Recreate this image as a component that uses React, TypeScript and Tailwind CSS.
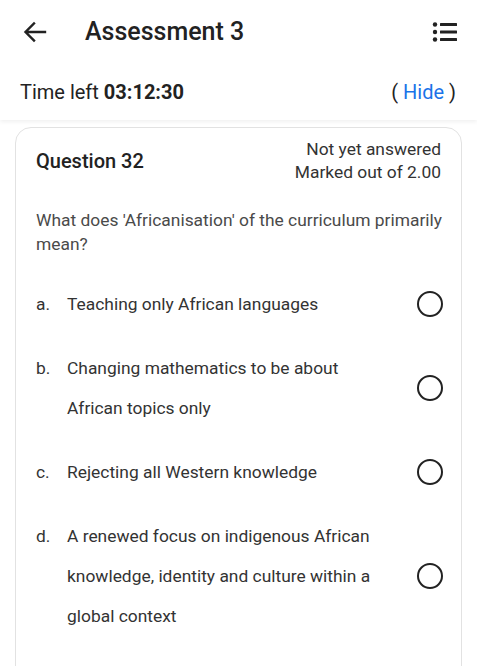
import React from "react";

type Option = { letter: string; text: string };

const options: Option[] = [
  { letter: "a.", text: "Teaching only African languages" },
  { letter: "b.", text: "Changing mathematics to be about African topics only" },
  { letter: "c.", text: "Rejecting all Western knowledge" },
  {
    letter: "d.",
    text: "A renewed focus on indigenous African knowledge, identity and culture within a global context",
  },
];

function BackArrow() {
  return (
    <svg width="24" height="24" viewBox="0 0 24 24" fill="none">
      <path d="M22 12H3M11 3.5L2.5 12L11 20.5" stroke="#222" strokeWidth="2.4" strokeLinecap="square" />
    </svg>
  );
}

function ListIcon() {
  return (
    <svg width="26" height="22" viewBox="0 0 26 22" fill="#222">
      <circle cx="3" cy="3.5" r="2.2" />
      <circle cx="3" cy="11" r="2.2" />
      <circle cx="3" cy="18.5" r="2.2" />
      <rect x="8" y="2" width="17" height="3" rx="0.5" />
      <rect x="8" y="9.5" width="17" height="3" rx="0.5" />
      <rect x="8" y="17" width="17" height="3" rx="0.5" />
    </svg>
  );
}

export default function App() {
  return (
    <div className="min-h-screen bg-white font-['Roboto',sans-serif] text-[#222]">
      <div className="shadow-[0_2px_4px_rgba(0,0,0,0.06)]">
        <div className="flex h-[63px] items-center pl-[23px] pr-[19px]">
          <BackArrow />
          <h1 className="ml-[38px] flex-1 text-[25px] font-medium">Assessment 3</h1>
          <ListIcon />
        </div>
        <div className="flex h-[57px] items-center justify-between pl-[20px] pr-[21px] text-[20px]">
          <p>
            Time left <span className="font-bold">03:12:30</span>
          </p>
          <p>
            ( <span className="text-[#1a73e8]">Hide</span> )
          </p>
        </div>
      </div>

      <div className="mx-[15px] mt-[7px] rounded-[16px] border border-[#e2e2e2] px-[20px] pt-[10px] pb-12">
        <div className="flex items-center justify-between">
          <h2 className="text-[20px] font-medium">Question 32</h2>
          <div className="text-right text-[17.4px] leading-[23px] text-[#333]">
            <p>Not yet answered</p>
            <p>Marked out of 2.00</p>
          </div>
        </div>

        <p className="mt-[24px] mr-[-6px] text-[17.4px] leading-[24px] text-[#4a4a4a]">
          What does 'Africanisation' of the curriculum primarily mean?
        </p>

        <div className="mt-[28px] flex flex-col gap-[24px]">
          {options.map((o) => (
            <div key={o.letter} className="flex items-center gap-8">
              <div className="flex flex-1 text-[17.4px] leading-[40px] text-[#333]">
                <span className="w-[31px] shrink-0">{o.letter}</span>
                <span>{o.text}</span>
              </div>
              <span className="mr-[-2px] h-[26px] w-[26px] shrink-0 rounded-full border-2 border-[#222]" />
            </div>
          ))}
        </div>
      </div>
    </div>
  );
}
